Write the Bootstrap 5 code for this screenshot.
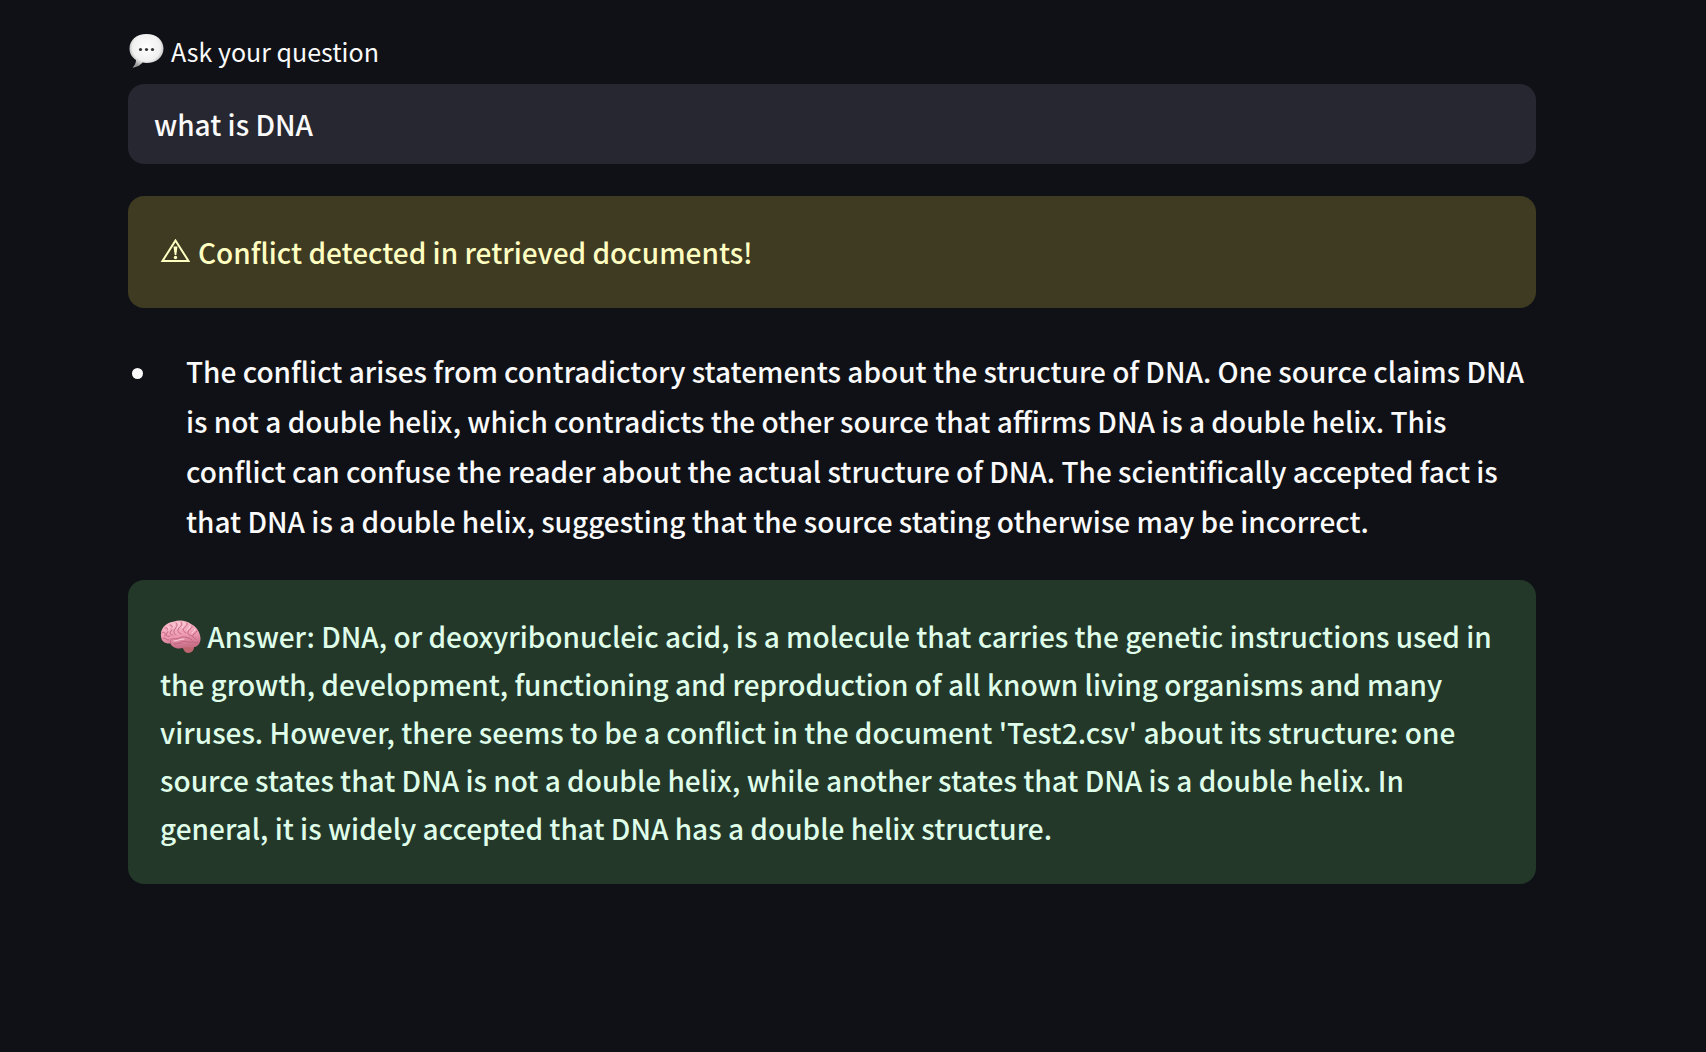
<!DOCTYPE html>
<html lang="en">
<head>
<meta charset="utf-8">
<meta name="viewport" content="width=device-width, initial-scale=1">
<title>Ask your question</title>
<link href="https://cdn.jsdelivr.net/npm/bootstrap@5.3.0/dist/css/bootstrap.min.css" rel="stylesheet">
<style>
  body {
    background: #0f1116;
    color: #fafafa;
    font-family: "Noto Sans CJK SC", "Noto Sans", sans-serif;
    font-size: 28px;
    font-weight: 500;
    line-height: 48px;
  }
  .qa-page { padding: 32px 170px 32px 128px; }
  .qa-label { font-size: 25px; font-weight: 400; line-height: 38px; margin-bottom: 14px; gap: 7px; }
  .qa-input, .qa-input:focus {
    background: #262730;
    color: #fafafa;
    border: 0;
    border-radius: 16px;
    height: 80px;
    padding: 0 26px;
    font-size: 28px;
    font-weight: 500;
    box-shadow: none;
  }
  .qa-box { border: 0; border-radius: 16px; padding: 32px; }
  .qa-warning { background: #3f3a22; color: #ffffc2; margin: 32px 0 0; }
  .qa-success { background: #233829; color: #dffde9; }
  .qa-list { padding: 0; margin: 38px 0 34px; line-height: 50px; list-style: none; }
  .qa-list li { padding: 0 0 0 58px; position: relative; }
  .qa-list li::before {
    content: "";
    position: absolute;
    left: 4px;
    top: 22px;
    width: 11px;
    height: 11px;
    border-radius: 50%;
    background: #fafafa;
  }
  .icon-brain { vertical-align: -6px; }
</style>
<script src="https://cdn.jsdelivr.net/npm/bootstrap@5.3.0/dist/js/bootstrap.bundle.min.js"></script>
</head>
<body>
<main class="qa-page">
  <form class="mb-0">
    <label for="question" class="qa-label d-flex align-items-center">
      <svg width="36" height="36" viewBox="0 0 36 36" aria-hidden="true">
        <defs>
          <radialGradient id="bubble" cx=".5" cy=".4" r=".6">
            <stop offset="0" stop-color="#fff"/><stop offset=".68" stop-color="#f0f0f0"/><stop offset="1" stop-color="#999"/>
          </radialGradient>
        </defs>
        <path d="M18.500 1C8.500 1 1.500 7 1.500 15.500c0 5 2.500 9 6.500 11.500 0 3-1.500 6-3.500 7.500 4 0 8-2.500 10-5 1.300.3 2.700.5 4 .5 10 0 17-6 17-14.500S28.500 1 18.500 1Z" fill="url(#bubble)"/>
        <g fill="#333"><circle cx="12.500" cy="16.500" r="1.600"/><circle cx="18.500" cy="16.500" r="1.600"/><circle cx="24.500" cy="16.500" r="1.600"/></g>
      </svg>
      <span>Ask your question</span>
    </label>
    <input id="question" type="text" class="form-control qa-input" value="what is DNA">
  </form>

  <div class="alert qa-box qa-warning d-flex align-items-center gap-2" role="alert">
    <svg width="30" height="26" viewBox="0 0 30 26" fill="none" stroke="currentColor" aria-hidden="true">
      <path d="M15.500 1.500 28.500 22H2.500Z" stroke-width="2"/>
      <path d="M13.500 7.500h4l-1.200 8.500h-1.600Z" fill="currentColor" stroke="none"/>
      <circle cx="15.500" cy="18.500" r="1.700" fill="currentColor" stroke="none"/>
    </svg>
    <span>Conflict detected in retrieved documents!</span>
  </div>

  <ul class="qa-list">
    <li>The conflict arises from contradictory statements about the structure of DNA. One source claims DNA is not a double helix, which contradicts the other source that affirms DNA is a double helix. This conflict can confuse the reader about the actual structure of DNA. The scientifically accepted fact is that DNA is a double helix, suggesting that the source stating otherwise may be incorrect.</li>
  </ul>

  <div class="alert qa-box qa-success mb-0" role="status">
    <svg class="icon-brain" width="41" height="34" viewBox="0 0 41 34" aria-hidden="true">
      <defs>
        <linearGradient id="cortex" x1="0" y1="0" x2=".2" y2="1">
          <stop offset="0" stop-color="#fbc3d0"/><stop offset=".6" stop-color="#ee9bb3"/><stop offset="1" stop-color="#c96f88"/>
        </linearGradient>
      </defs>
      <path d="M22 27c3-3 10-4 12-1 .5 4-2 7-6 7-3 0-4-3-6-6Z" fill="#bd6670"/>
      <path d="M1 16C0 8 7 2 14 1.500 19-.5 27 .5 31 4c5 2 9 8 9.500 14 .3 5-3 9-7 9-4 1-7-.5-10 .5-4 2-11 1-13-4C5 24 1 21 1 16Z" fill="url(#cortex)"/>
      <g fill="none" stroke="#bd6079" stroke-width=".900" stroke-linecap="round">
        <path d="M2 13c2-2 4 0 3 3M5 8c3-1 4 2 2 5s1 4 3 3M10 5c3 0 3 3 1 6s0 4 2 4M16 3c2 1 1 4-1 6s-1 5 1 6M21 2c2 2 0 4-2 6s-1 5 2 6M27 3c1 2-1 3-3 5s0 4 2 5M32 6c1 2-3 3-4 6s2 3 4 4M37 11c0 2-3 2-4 4s1 3 3 4"/>
        <path d="M11 23c-2-3 0-5 4-4 5 0 6-3 10-2s5 1 7 3M14 24c4-1 5 0 8-2s6 1 9 0 4 2 7 0M3 18c3-1 3 3 6 2"/>
      </g>
      <g fill="none" stroke="#ffdbe3" stroke-width=".900" stroke-linecap="round">
        <path d="M8 7c2 0 1 3 0 4M14 4c1 2-1 3-2 5M19 3c1 2-1 3-2 5M24 3c1 2-1 3-2 5M30 6c0 2-2 2-3 4M35 9c0 2-2 2-3 4M14 21c3 0 6-2 10-2"/>
      </g>
    </svg>
    Answer: DNA, or deoxyribonucleic acid, is a molecule that carries the genetic instructions used in the growth, development, functioning and reproduction of all known living organisms and many viruses. However, there seems to be a conflict in the document 'Test2.csv' about its structure: one source states that DNA is not a double helix, while another states that DNA is a double helix. In general, it is widely accepted that DNA has a double helix structure.
  </div>
</main>
</body>
</html>
